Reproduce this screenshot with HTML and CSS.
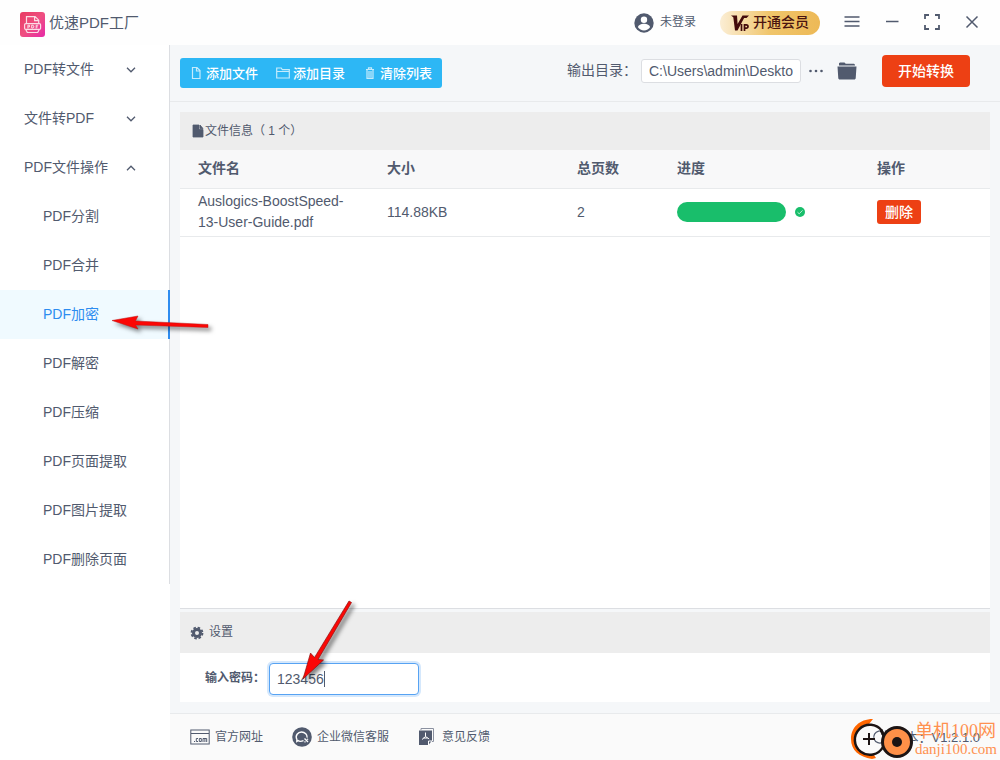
FILE: index.html
```html
<!DOCTYPE html>
<html lang="zh-CN">
<head>
<meta charset="utf-8">
<title>优速PDF工厂</title>
<link rel="stylesheet" href="styles.css">
</head>
<body>
<div class="app">
  <header class="titlebar">
    <svg class="logo" viewBox="0 0 25 25" width="25" height="25" aria-hidden="true">
      <defs><linearGradient id="lg" x1="0" y1="0" x2="1" y2="1"><stop offset="0" stop-color="#e83a62"/><stop offset=".5" stop-color="#ef4f80"/><stop offset="1" stop-color="#e62aa8"/></linearGradient></defs>
      <rect width="25" height="25" rx="3" fill="url(#lg)"/>
      <g fill="none" stroke="#fbdde6" stroke-width="1.2"><path d="M6.500 11.500V4.600h8.600l3.600 3.600v3.300M14.600 4.800v3.800h4M5.800 17.500l1.500 3h10.400l1.500-3"/><rect x="4.600" y="11.600" width="16" height="5.800" rx="1.200"/><path d="M7.900 16.500v-3.300h1.600v1.700H8M11.700 13.200v2.800h1.300l.8-.8v-1.200l-.8-.8zM16.200 16.500v-3.300h2M16.200 14.900h1.600" stroke-width="1"/></g>
    </svg>
    <h1 class="title">优速PDF工厂</h1>
    <button class="plain user"><svg viewBox="0 0 20 20" width="20" height="20" aria-hidden="true"><circle cx="10" cy="10" r="9.700" fill="#515a6e"/><circle cx="10" cy="6.800" r="3.200" fill="#fff"/><path d="M4 14.300c0-2.400 3.400-3.600 6-3.600s6 1.200 6 3.600C14.800 16.300 12.500 17.400 10 17.400S5.200 16.300 4 14.300z" fill="#fff"/></svg>未登录</button>
    <button class="vip"><svg viewBox="0 0 18 18" width="18" height="18" aria-hidden="true"><path d="M0 1.500h6L6.600 10 11.500 1.500H18L15.500 4h-2.400L6.500 16.500H4L2.300 3.200z" fill="#430b0b"/><path d="M10.500 10v7M13.500 17v-6.200h1.800a1.600 1.600 0 0 1 0 3.400h-1.800" fill="none" stroke="#430b0b" stroke-width="1.700"/></svg>开通会员</button>
    <button class="plain win win-menu" aria-label="菜单"><svg viewBox="0 0 20 20" width="20" height="20"><path d="M2.500 4h15M2.500 8.500h15M2.500 13h15" stroke="#515a6e" stroke-width="1.500"/></svg></button>
    <button class="plain win" aria-label="最小化"><svg viewBox="0 0 20 20" width="20" height="20"><path d="M4 8.500h12.500" stroke="#515a6e" stroke-width="1.500"/></svg></button>
    <button class="plain win" aria-label="最大化"><svg viewBox="0 0 20 20" width="20" height="20"><path d="M3 6V2h4M13 2h4v4M17 12v4h-4M7 16H3v-4" fill="none" stroke="#515a6e" stroke-width="1.800"/></svg></button>
    <button class="plain win" aria-label="关闭"><svg viewBox="0 0 20 20" width="20" height="20"><path d="M4.500 3.500l11 11M15.500 3.500l-11 11" stroke="#515a6e" stroke-width="1.500"/></svg></button>
  </header>

  <div class="body">
    <aside class="sidebar">
      <nav class="menu">
        <button class="group">PDF转文件<svg viewBox="0 0 10 6" width="10" height="6"><path d="M1 .8l4 4 4-4"/></svg></button>
        <button class="group">文件转PDF<svg viewBox="0 0 10 6" width="10" height="6"><path d="M1 .8l4 4 4-4"/></svg></button>
        <button class="group" aria-expanded="true">PDF文件操作<svg viewBox="0 0 10 6" width="10" height="6"><path d="M1 5.200l4-4 4 4"/></svg></button>
        <a class="item" href="#">PDF分割</a>
        <a class="item" href="#">PDF合并</a>
        <a class="item active" href="#">PDF加密</a>
        <a class="item" href="#">PDF解密</a>
        <a class="item" href="#">PDF压缩</a>
        <a class="item" href="#">PDF页面提取</a>
        <a class="item" href="#">PDF图片提取</a>
        <a class="item" href="#">PDF删除页面</a>
      </nav>
    </aside>

    <main class="main">
      <div class="toolbar">
        <div class="actions">
          <button><svg viewBox="0 0 14 14" width="14" height="14"><path d="M3.500 1.500h4.500l3 3v8h-7.500zM7.500 1.500v3.500H11"/></svg>添加文件</button>
          <button><svg viewBox="0 0 14 14" width="14" height="14"><path d="M.7 12V2h4.600l1 1.700h7V12zM.7 5.500h12.600"/></svg>添加目录</button>
          <button><svg viewBox="0 0 14 14" width="14" height="14"><path d="M3 3.500h8M5.500 3V1.800h3V3M4 4v8.300h6V4M6 5v6.500M8 5v6.500"/></svg>清除列表</button>
        </div>
        <div class="output">
          <label for="outdir">输出目录：</label>
          <input id="outdir" class="path" type="text" value="C:\Users\admin\Deskto">
          <button class="plain more" aria-label="更多"><svg viewBox="0 0 16 4" width="16" height="4" fill="#515a6e"><circle cx="2.500" cy="2" r="1.300"/><circle cx="8" cy="2" r="1.300"/><circle cx="13.500" cy="2" r="1.300"/></svg></button>
          <button class="plain folder" aria-label="打开目录"><svg viewBox="0 0 20 18" width="20" height="18" fill="#515a6e"><path d="M2 3.500V1.200L3 .5h4.500l1.200 1.200H17l1 1v.8zM.5 4.500h19l-.8 12-.9 1H2.200l-.9-1z"/></svg></button>
          <button class="start">开始转换</button>
        </div>
      </div>

      <div class="content">
        <section class="files">
          <h2 class="bar"><svg viewBox="0 0 12 14" width="12" height="14"><path d="M1 1h6v4.500h4V13H1zM8 1l3 3.500H8z" fill="#515a6e" stroke="#515a6e" stroke-width=".8"/></svg>文件信息（ 1 个）</h2>
          <table>
            <colgroup><col class="c-name"><col class="c-size"><col class="c-pages"><col class="c-progress"><col></colgroup>
            <thead><tr><th>文件名</th><th>大小</th><th>总页数</th><th>进度</th><th>操作</th></tr></thead>
            <tbody><tr>
              <td>Auslogics-BoostSpeed-13-User-Guide.pdf</td><td>114.88KB</td><td>2</td>
              <td><div class="progress"><span class="track"><span class="fill" style="width:100%"></span></span><svg viewBox="0 0 10 10" width="10" height="10"><circle cx="5" cy="5" r="5" fill="#19be6b"/><path d="M2.500 5.200l1.700 1.600 3.300-3.400" fill="none" stroke="#c8f2dc" stroke-width=".9"/></svg></div></td>
              <td><button class="delete">删除</button></td>
            </tr></tbody>
          </table>
        </section>

        <section class="settings">
          <h2 class="bar"><svg viewBox="0 0 14 14" width="14" height="14"><g fill="none" stroke="#515a6e"><circle cx="7" cy="7" r="3.500" stroke-width="3"/><circle cx="7" cy="7" r="5.500" stroke-width="1.800" stroke-dasharray="2.500 1.820"/></g></svg>设置</h2>
          <div class="form">
            <label for="pwd">输入密码：</label>
            <div class="field"><input id="pwd" type="text" value="123456"><span class="caret"></span></div>
          </div>
        </section>
      </div>

      <footer class="footer">
        <a href="#"><svg viewBox="0 0 20 16" width="20" height="16" fill="none" stroke="#515a6e"><rect x=".8" y="1" width="18.400" height="14"/><path d="M1 4.500h18"/><path d="M4 12.500h1M8 9.500H6.300v3H8M9.300 9.500h2v3h-2zM13 13V9.500h3.700V13M14.900 9.500V13"/></svg>官方网址</a>
        <a href="#"><svg viewBox="0 0 20 20" width="20" height="20" fill="none" stroke="#fff" stroke-width="1.400"><circle cx="10" cy="10" r="9.800" fill="#515a6e" stroke="none"/><path d="M11.500 13.700c-2.500 1-4.500.6-5.400 0L4.800 14.500l.1-2C2.800 8.500 6 5 9.500 5s6 2.700 5.600 5.600"/><path d="M12.500 11.500l3.500 3.500M15.800 11.700l-.5 1M13.500 15.200l-1-.7"/></svg>企业微信客服</a>
        <a href="#"><svg viewBox="0 0 16 18" width="16" height="18"><path d="M3 2V.5h12.500v13H14" fill="none" stroke="#8b91a0"/><path d="M1 2.500h13v10L10.500 17H1z" fill="#515a6e"/><path d="M10.500 17v-4H14" fill="none" stroke="#fff"/><path d="M7.500 4.500v4L4 11.500M7.500 8.500l3.700 2.500M5.500 10h4" fill="none" stroke="#fff"/></svg>意见反馈</a>
        <span class="version"><svg viewBox="0 0 16 16" width="16" height="16"><path d="M13.700 9A6 6 0 1 1 11.500 3.300M9.500 5.500h4V1.500" fill="none" stroke="#515a6e" stroke-width="1.200"/></svg>版本：V1.2.1.0</span>
      </footer>
    </main>
  </div>

  <svg class="arrow arrow-menu" viewBox="0 0 104 30" width="104" height="30" aria-hidden="true"><path d="M2 10.500L28 6l-2.500 5L98 14.500v3l-72.500-2.500L28 19z" fill="#fb0705" stroke="#c01010" stroke-width=".5"/></svg>
  <svg class="arrow arrow-pwd" viewBox="0 0 60 84" width="60" height="84" aria-hidden="true"><path d="M2 79L9.500 53l4 4.500L48 1l2.500 1.500L17 59.500l5.500.5z" fill="#fb0705" stroke="#8e1010" stroke-width=".7"/></svg>

  <div class="mark">
    <svg viewBox="0 0 64 42" width="64" height="42" aria-hidden="true">
      <path d="M23 1C9 1 1 10 1 21s8 18 21 20l4-1-2-3C12 37 5 30 5 21S11 7 19 6z" fill="#f60"/>
      <path d="M33 29A15 15 0 1 1 32 13" fill="none" stroke="#1c1414" stroke-width="2.500"/>
      <path d="M13 21h12M19 15v12" stroke="#1c1414" stroke-width="2"/>
      <path d="M31 12l4 8 3-7" fill="none" stroke="#1c1414" stroke-width="3"/>
      <circle cx="47" cy="24" r="14.500" fill="#ff9048" stroke="#1c1414" stroke-width="3"/><circle cx="47" cy="24" r="5" fill="#1c1414"/>
    </svg>
    <div class="mark-text"><span class="mark-name">单机100网</span><span class="mark-url">danji100.com</span></div>
  </div>
</div>
</body>
</html>
```
FILE: styles.css
```css
* { box-sizing: border-box; }
body {
  margin: 0;
  color: #515a6e;
  font: 14px/21px "Liberation Sans", "Noto Sans CJK SC", sans-serif;
}
button, input { font: inherit; color: inherit; }
button { cursor: pointer; border: 0; padding: 0; }
a { color: inherit; text-decoration: none; }
svg { display: block; flex: none; }
h1, h2 { margin: 0; font-weight: 400; }
.app { position: relative; min-height: 100vh; display: flex; flex-direction: column; background: #fff; overflow: hidden; }
.plain { background: none; }

.titlebar { height: 45px; display: flex; align-items: center; padding: 0 18px 0 20px; background: #fefefe; }
.logo { margin-top: 3px; }
.title { font-size: 15px; margin-left: 4px; flex: 1; }
.user { display: flex; align-items: center; gap: 6px; font-size: 12px; }
.vip {
  display: flex; align-items: center; justify-content: center; gap: 4px;
  width: 100px; height: 24px; margin-left: 24px; border-radius: 12px;
  background: linear-gradient(90deg, #fbeed5, #f0c56b 50%, #edb956);
  color: #4a1410; font-weight: 500;
}
.win { width: 20px; margin-left: 20px; }
.win-menu { margin-left: 22px; }

.body { flex: 1; display: flex; }
.sidebar { width: 170px; flex: none; }
.menu { border-right: 1px solid #dcdee2; }
.group, .item { display: flex; align-items: center; width: 100%; height: 49px; background: none; }
.group { justify-content: space-between; padding: 0 33px 0 24px; }
.group svg { fill: none; stroke: #515a6e; stroke-width: 1.3; }
.item { padding-left: 43px; }
.item.active { width: 170px; color: #2d8cf0; background: #f0faff; border-right: 2px solid #2d8cf0; }

.main { flex: 1; min-width: 0; display: flex; flex-direction: column; background: #f5f7f9; }
.toolbar { height: 57px; display: flex; justify-content: space-between; align-items: flex-start; padding: 10px 30px 0 10px; border-bottom: 1px solid #e8eaec; }
.actions { display: flex; margin-top: 3px; padding-right: 1px; border-radius: 3px; background: #2db7f5; overflow: hidden; }
.actions button { display: flex; align-items: center; gap: 3px; width: 87px; height: 30px; padding-left: 9px; background: none; color: #fff; font-size: 13px; font-weight: 500; }
.actions svg { fill: none; stroke: #c5ebfc; stroke-width: 1.2; }
.output { display: flex; align-items: center; }
.output label { margin-bottom: 2px; }
.path { width: 160px; height: 24px; margin-left: 4px; padding: 0 7px; border: 1px solid #dcdee2; border-radius: 3px; background: #fff; }
.more { margin-left: 7px; }
.folder { margin-left: 13px; }
.start { width: 88px; height: 32px; margin-left: 25px; border-radius: 4px; background: #ed4014; color: #fff; font-weight: 500; }

.content { flex: 1; display: flex; flex-direction: column; gap: 3px; padding: 10px 10px 11px; }
.bar { display: flex; align-items: center; background: #ededed; font-size: 12px; }
.files { flex: 1; background: #fff; border-bottom: 1px solid #dcdee2; }
.files .bar { height: 38px; padding-left: 12px; gap: 1px; }
table { width: 100%; table-layout: fixed; border-collapse: collapse; }
th, td { height: 48px; padding: 0 18px; text-align: left; border-bottom: 1px solid #e8eaec; overflow-wrap: break-word; }
th { height: 38px; background: #f8f8f9; font-weight: 700; }
td:first-child { padding-right: 10px; }
td:last-child, th:last-child { padding-right: 0; }
.c-name { width: 189px; }
.c-size { width: 190px; }
.c-pages { width: 100px; }
.c-progress { width: 200px; }
.progress { display: flex; align-items: center; gap: 9px; }
.track { width: 109px; height: 20px; border-radius: 10px; background: #f3f3f3; overflow: hidden; }
.fill { display: block; height: 100%; background: #19be6b; }
.delete { display: block; width: 44px; height: 24px; border-radius: 3px; background: #ed4014; color: #fff; font-weight: 500; }

.settings { background: #fff; }
.settings .bar { height: 41px; padding-left: 10px; gap: 5px; }
.form { display: flex; align-items: center; height: 49px; padding: 2px 0 0 25px; font-size: 12px; font-weight: 700; }
.field { position: relative; margin-left: 4px; font-size: 14px; font-weight: 400; }
.field input { display: block; width: 150px; height: 32px; padding: 0 7px; border: 1px solid #57a3f3; border-radius: 4px; outline: 0; box-shadow: 0 0 0 2px #d5e8fc; }
.caret { position: absolute; left: 55px; top: 8px; width: 1px; height: 16px; background: #515a6e; }

.footer { height: 47px; display: flex; align-items: center; gap: 29px; padding: 0 20px; border-top: 1px solid #e8eaec; background: #fafafa; font-size: 12px; }
.footer a, .version { display: flex; align-items: center; gap: 5px; }
.footer a:nth-child(3) { gap: 8px; }
.version { margin-left: auto; font-size: 13px; }

.arrow { position: absolute; filter: drop-shadow(3px 3px 2px rgba(0, 0, 0, .5)); pointer-events: none; }
.arrow-menu { left: 110px; top: 310px; }
.arrow-pwd { left: 301px; top: 600px; }
.mark { position: absolute; right: 3px; bottom: 0; display: flex; align-items: center; gap: 1px; color: #ff9150; pointer-events: none; }
.mark-text { display: flex; flex-direction: column; font-family: "Liberation Serif", "Noto Sans CJK SC", serif; }
.mark-name { font-size: 18px; line-height: 20px; }
.mark-url { font-size: 15px; line-height: 16px; }
```
